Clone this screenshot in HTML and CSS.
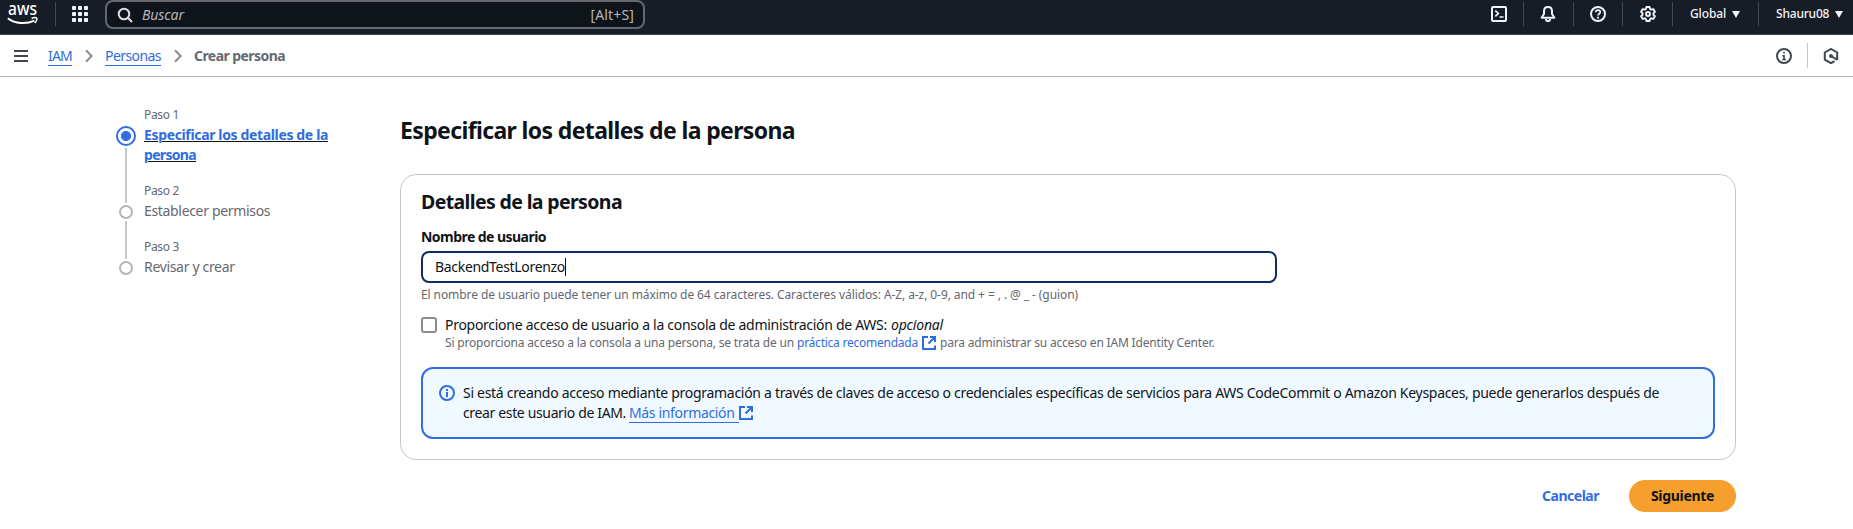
FILE: index.html
```html
<!DOCTYPE html>
<html lang="es">
<head>
<meta charset="utf-8">
<title>Crear persona | IAM</title>
<link rel="stylesheet" href="styles.css">
</head>
<body>
<header class="topbar">
  <svg class="logo" width="32" height="24" viewBox="0 0 32 24">
    <text class="logo-text" x="1" y="14.200" textLength="29" lengthAdjust="spacingAndGlyphs">aws</text>
    <path d="M.8 17.2C8 22.8 19 23.6 27.5 19.6" fill="none" stroke="#fff" stroke-width="2"/>
    <path d="M24.6 17.5c2-.9 4.2-1 5-.4.5.8-.2 3.200-1.700 5" fill="none" stroke="#fff" stroke-width="1.500"/>
  </svg>
  <span class="sep sep-first"></span>
  <svg class="grid-icon" width="16" height="16" viewBox="0 0 16 16" fill="#f3f3f7">
    <rect width="4" height="4" rx=".8"/><rect x="6" width="4" height="4" rx=".8"/><rect x="12" width="4" height="4" rx=".8"/>
    <rect y="6" width="4" height="4" rx=".8"/><rect x="6" y="6" width="4" height="4" rx=".8"/><rect x="12" y="6" width="4" height="4" rx=".8"/>
    <rect y="12" width="4" height="4" rx=".8"/><rect x="6" y="12" width="4" height="4" rx=".8"/><rect x="12" y="12" width="4" height="4" rx=".8"/>
  </svg>
  <div class="search">
    <svg width="16" height="16" viewBox="0 0 16 16" fill="none" stroke="#dedee3" stroke-width="2"><circle cx="7" cy="7" r="5.300"/><path d="M10.800 10.800 15 15"/></svg>
    <span class="search-hint">Buscar</span>
    <span class="shortcut">[Alt+S]</span>
  </div>
  <nav class="tools">
    <span class="tool w-terminal"><svg width="16" height="16" viewBox="0 0 16 16" fill="none" stroke="#f3f3f7" stroke-width="2" stroke-linejoin="round"><rect x="1" y="1" width="14" height="14" rx="1"/><path d="M4.300 4.600 7.300 7.500 4.300 10.400M8.500 11h4" stroke-width="1.700" stroke-linejoin="miter"/></svg></span>
    <span class="tool w-bell"><svg width="16" height="16" viewBox="0 0 16 16" fill="none" stroke="#f3f3f7" stroke-width="2" stroke-linejoin="round"><path d="M8 1C5.300 1 4 3 4 5.300V8L1.600 11.700h12.800L12 8V5.300C12 3 10.700 1 8 1z"/><path d="M5.800 13c.2 1.400 1 2.200 2.200 2.200s2-.8 2.200-2.200"/></svg></span>
    <span class="tool w-help"><svg width="16" height="16" viewBox="0 0 16 16" fill="none" stroke="#f3f3f7" stroke-width="2"><circle cx="8" cy="8" r="7"/><path d="M5.700 6.300C5.700 5 6.700 4.200 8 4.200s2.300.8 2.300 2C10.300 7.700 8 7.800 8 9.600" stroke-width="1.700"/><path d="M8 10.800v1.700"/></svg></span>
    <span class="tool w-gear"><svg width="16" height="16" viewBox="0 0 16 16" fill="none" stroke="#f3f3f7" stroke-width="1.900" stroke-linejoin="round"><path d="M6.400 1h3.200l.5 2 1.200.7 2-.6 1.600 2.700L13.500 7.200v1.600l1.400 1.400-1.600 2.700-2-.6-1.200.7-.5 2H6.400l-.5-2-1.200-.7-2 .6-1.600-2.700L2.500 8.800V7.200L1.100 5.800l1.600-2.700 2 .6L5.900 3z"/><circle cx="8" cy="8" r="2"/></svg></span>
    <span class="tool w-global"><span class="t-global">Global</span><span class="caret-down"></span></span>
    <span class="tool w-user"><span class="t-user">Shauru08</span><span class="caret-down"></span></span>
  </nav>
</header>

<div class="crumbbar">
  <svg class="menu" width="14" height="12" viewBox="0 0 14 12" fill="#424650"><path d="M0 0h14v2H0zM0 5h14v2H0zM0 10h14v2H0z"/></svg>
  <nav class="crumbs">
    <a class="crumb c-iam">IAM</a>
    <svg class="chev" width="8" height="14" viewBox="0 0 8 14"><path d="M1 1.200 6.600 7 1 12.800"/></svg>
    <a class="crumb c-personas">Personas</a>
    <svg class="chev" width="8" height="14" viewBox="0 0 8 14"><path d="M1 1.200 6.600 7 1 12.800"/></svg>
    <span class="c-current">Crear persona</span>
  </nav>
  <div class="panel-tools">
    <svg width="16" height="16" viewBox="0 0 16 16" fill="none" stroke="#424650" stroke-width="2"><circle cx="8" cy="8" r="7"/><path d="M8 3.800v1.700M6.300 7.800H8v4M6.200 11.500h3.800" stroke-width="1.600"/></svg>
    <span class="panel-sep"></span>
    <svg width="16" height="16" viewBox="0 0 16 16" fill="none" stroke="#424650" stroke-width="2"><path d="M11.500 13.200 8 15.200 1.800 11.700V4.500L8 1l6.200 3.500v7.500"/><path d="M8 8l6.300 3.800"/><circle cx="8" cy="8" r="2" fill="#424650" stroke="none"/></svg>
  </div>
</div>

<div class="layout">
  <ol class="steps">
    <li class="step">
      <div class="rail"><span class="dot-active"></span><span class="line"></span></div>
      <div class="step-text"><div class="step-label">Paso 1</div><div class="step-title current"><span class="s1a">Especificar los detalles de la</span><br><span class="s1b">persona</span></div></div>
    </li>
    <li class="step">
      <div class="rail"><span class="line-in"></span><span class="dot"></span><span class="line"></span></div>
      <div class="step-text"><div class="step-label">Paso 2</div><div class="step-title">Establecer permisos</div></div>
    </li>
    <li class="step">
      <div class="rail"><span class="line-in"></span><span class="dot"></span></div>
      <div class="step-text"><div class="step-label">Paso 3</div><div class="step-title">Revisar y crear</div></div>
    </li>
  </ol>

  <main class="main">
    <h1 class="title">Especificar los detalles de la persona</h1>
    <section class="card">
      <h2 class="card-title">Detalles de la persona</h2>
      <div class="label">Nombre de usuario</div>
      <div class="input"><span class="value">BackendTestLorenzo</span><span class="cursor"></span></div>
      <div class="hint">El nombre de usuario puede tener un máximo de 64 caracteres. Caracteres válidos: A-Z, a-z, 0-9, and + = , . @ _ - (guion)</div>
      <div class="check">
        <span class="box"></span>
        <div>
          <div class="check-label"><span>Proporcione acceso de usuario a la consola de administración de AWS:</span><i class="optional">opcional</i></div>
          <div class="check-desc"><span class="d1">Si proporciona acceso a la consola a una persona, se trata de un</span><a class="d2">práctica recomendada</a><svg class="ext" width="14" height="14" viewBox="0 0 14 14"><path d="M6 1H1v12h12V9.500M8 1h5v5M13 1 6.500 7.500"/></svg><span class="d3">para administrar su acceso en IAM Identity Center.</span></div>
        </div>
      </div>
      <div class="alert">
        <svg class="alert-icon" width="16" height="16" viewBox="0 0 16 16" fill="none" stroke="#2f6de0" stroke-width="2"><circle cx="8" cy="8" r="7"/><path d="M8 4v2M8 7v5"/></svg>
        <div>
          <div class="a1">Si está creando acceso mediante programación a través de claves de acceso o credenciales específicas de servicios para AWS CodeCommit o Amazon Keyspaces, puede generarlos después de</div>
          <div class="a2"><span>crear este usuario de IAM.</span><a class="more">Más información</a><svg class="ext ext-alert" width="14" height="14" viewBox="0 0 14 14"><path d="M6 1H1v12h12V9.500M8 1h5v5M13 1 6.500 7.500"/></svg></div>
        </div>
      </div>
    </section>
    <div class="actions"><span class="cancel">Cancelar</span><span class="next">Siguiente</span></div>
  </main>
</div>
</body>
</html>
```
FILE: styles.css
```css
* { box-sizing: border-box; }
body {
  margin: 0;
  background: #fff;
  color: #0f141a;
  font: 14px/20px "Noto Sans", "Open Sans", sans-serif;
  white-space: nowrap;
  overflow: hidden;
}
svg { display: block; flex: none; }
a { color: #2f6de0; }

/* Top navigation */
.topbar {
  height: 35px;
  display: flex;
  align-items: flex-start;
  background: #161d26;
  border-bottom: 1px solid #424650;
  padding-left: 7px;
}
.logo-text { font: 500 17.500px "Noto Sans", sans-serif; fill: #fff; }
.logo { margin-top: 1px; overflow: visible; }
.sep-first { width: 1px; height: 24px; margin: 2px 16px 0; background: #424650; }
.grid-icon { margin-top: 6px; }
.search {
  width: 540px;
  height: 29px;
  margin-left: 17px;
  padding: 0 9px 0 10px;
  display: flex;
  align-items: center;
  background: #0f141a;
  border: 2px solid #656871;
  border-radius: 8px;
}
.search-hint { margin-left: 9px; font-style: italic; color: #b4b4bb; letter-spacing: -.07px; }
.shortcut { margin-left: auto; color: #b4b4bb; letter-spacing: .14px; }
.tools { margin-left: auto; display: flex; padding-top: 2px; }
.tool { height: 24px; display: flex; align-items: center; border-left: 1px solid #424650; color: #f3f3f7; font-size: 12px; font-weight: 500; }
.w-terminal { width: 32px; border-left: 0; }
.w-bell { width: 50px; padding-left: 16px; }
.w-help { width: 49px; padding-left: 16px; }
.w-gear { width: 50px; padding-left: 17px; }
.w-global { width: 86px; padding-left: 17px; }
.w-user { width: 95px; padding-left: 17px; }
.t-global { width: 42px; letter-spacing: -.12px; }
.t-user { width: 59px; letter-spacing: -.2px; }
.caret-down { border: 4px solid transparent; border-top: 7px solid #f3f3f7; border-bottom: 0; }

/* Breadcrumb bar */
.crumbbar { height: 42px; padding: 0 14px; display: flex; align-items: center; border-bottom: 1px solid #b4b4bb; }
.crumbs { display: flex; align-items: center; margin-left: 20px; }
.crumb { height: 20px; border-bottom: 1px solid #2f6de0; line-height: 20px; }
.c-iam { width: 24px; letter-spacing: -.8px; }
.c-personas { width: 56px; letter-spacing: -.57px; }
.c-current { font-weight: bold; color: #656871; letter-spacing: -.564px; }
.chev { margin: 0 12px 0 13px; fill: none; stroke: #8c8c94; stroke-width: 2; }
.panel-tools { margin-left: auto; display: flex; align-items: center; }
.panel-sep { width: 1px; height: 25px; margin: 0 15px; background: #c6c6cd; }

/* Page layout */
.layout { display: grid; grid-template-columns: 284px 1336px; padding: 29px 0 0 116px; }
.steps { list-style: none; margin: 0; padding: 0; }
.step { display: flex; gap: 8px; color: #656871; }
.rail { width: 20px; display: flex; flex-direction: column; align-items: center; gap: 2px; }
.dot-active { width: 20px; height: 20px; margin-top: 20px; border: 2px solid #2f6de0; border-radius: 50%; background: radial-gradient(circle, #2f6de0 4.700px, #fff 5.300px); }
.dot { width: 14px; height: 14px; border: 2px solid #b4b4bb; border-radius: 50%; }
.line { flex: 1; width: 2px; background: #c6c6cd; }
.line-in { width: 2px; height: 21px; background: #c6c6cd; }
.step-text { padding-bottom: 17px; }
.step-label { padding-top: 1px; font-size: 12px; line-height: 16px; letter-spacing: -.33px; }
.step-title { margin-top: 2px; letter-spacing: -.33px; }
.current { font-weight: bold; color: #2f6de0; }
.s1a, .s1b { text-decoration: underline 1px #0f141a; text-underline-offset: 1px; letter-spacing: -.354px; }
.s1b { letter-spacing: -.675px; }

.title { margin: 9px 0 29px; font-size: 23px; line-height: 30px; letter-spacing: -.63px; font-weight: bold; }
.card { height: 286px; padding: 15px 20px 0; border: 1px solid #c6c6cd; border-radius: 16px; }
.card-title { margin: 0 0 13px; font-size: 19.500px; line-height: 24px; letter-spacing: -.63px; }
.label { font-weight: bold; letter-spacing: -.545px; }
.input { width: 856px; height: 32px; margin-top: 4px; padding-left: 12px; display: flex; align-items: center; border: 2px solid #0f2b66; border-radius: 8px; }
.value { width: 130px; letter-spacing: -.315px; }
.cursor { width: 1px; height: 18px; background: #0f141a; }
.hint { margin-top: 4px; font-size: 12px; line-height: 16px; color: #656871; letter-spacing: -.089px; }
.check { display: flex; gap: 8px; margin-top: 12px; }
.box { width: 16px; height: 16px; margin-top: 2px; border: 2px solid #8c8c94; border-radius: 3px; }
.check-label { letter-spacing: -.28px; display: flex; }
.optional { margin-left: 4px; letter-spacing: -.187px; }
.check-desc { display: flex; align-items: flex-start; font-size: 12px; line-height: 16px; color: #656871; }
.d1 { width: 352px; letter-spacing: -.173px; }
.d2 { width: 125px; letter-spacing: -.238px; }
.d3 { margin-left: 4px; letter-spacing: -.18px; }
.ext { margin-top: 1px; fill: none; stroke: #2f6de0; stroke-width: 2; }
.alert { height: 72px; margin-top: 16px; padding: 14px 16px; display: flex; gap: 8px; background: #f0f9ff; border: 2px solid #2f6de0; border-radius: 12px; }
.alert-icon { margin-top: 2px; }
.a1 { letter-spacing: -.296px; }
.a2 { display: flex; }
.a2 span { width: 166px; letter-spacing: -.355px; }
.more { width: 110px; height: 20px; letter-spacing: -.34px; border-bottom: 1px solid #2f6de0; }
.ext-alert { margin-top: 3px; }
.actions { display: flex; justify-content: flex-end; align-items: center; margin-top: 20px; font-weight: bold; }
.cancel { color: #2f6de0; letter-spacing: -.484px; margin-right: 30px; }
.next { width: 107px; height: 32px; line-height: 32px; text-align: center; border-radius: 16px; background: #f59f2c; letter-spacing: -.325px; }
```
